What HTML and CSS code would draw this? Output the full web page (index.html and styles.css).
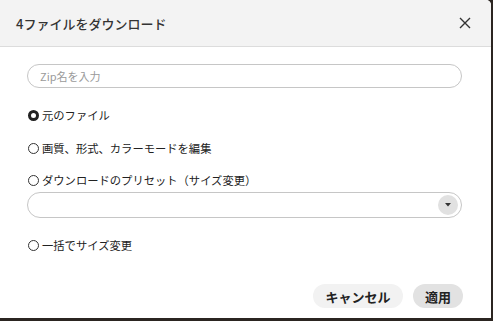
FILE: index.html
```html
<!DOCTYPE html>
<html lang="ja">
<head>
  <meta charset="UTF-8">
  <title>4ファイルをダウンロード</title>
  <link rel="stylesheet" href="styles.css">
</head>
<body>

  <div class="dialog">
    <div class="dialog-head">
      <h2 class="title">4ファイルをダウンロード</h2>
      <button class="close" aria-label="閉じる">
        <svg width="12" height="12" viewBox="0 0 12 12"><path d="M1 1L11 11M11 1L1 11" stroke="#333" stroke-width="1.4" fill="none"/></svg>
      </button>
    </div>

    <div class="dialog-body">
      <input class="zip-name" type="text" placeholder="Zip名を入力">

      <label class="opt opt-first"><span class="radio checked"></span>元のファイル</label>
      <label class="opt"><span class="radio"></span>画質、形式、カラーモードを編集</label>
      <label class="opt opt-tight"><span class="radio"></span>ダウンロードのプリセット（サイズ変更）</label>

      <div class="select">
        <span class="select-arrow">
          <svg width="6" height="4" viewBox="0 0 6 4"><path d="M0 0H6L3 3.5Z" fill="#333"/></svg>
        </span>
      </div>

      <label class="opt opt-last"><span class="radio"></span>一括でサイズ変更</label>
    </div>

    <div class="dialog-foot">
      <button class="btn btn-cancel">キャンセル</button>
      <button class="btn btn-apply">適用</button>
    </div>
  </div>

</body>
</html>
```

FILE: styles.css
```css
body {
  margin: 0;
  background-color: #2b2521;
  font-family: "Noto Sans CJK JP", "Noto Sans", sans-serif;
  color: #222;
}
.dialog {
  width: 491px;
  height: 318px;
  background-color: #fff;
  border-top-right-radius: 5px;
  display: flex;
  flex-direction: column;
  overflow: hidden;
}
.dialog-head {
  height: 46px;
  background-color: #f3f3f3;
  border-bottom: 1px solid #dcdcdc;
  display: flex;
  align-items: center;
  justify-content: space-between;
  padding: 0 20px 0 16px;
}
.title {
  margin: 0;
  font-size: 13px;
  font-weight: 500;
  color: #333;
}
.close {
  background: none;
  border: none;
  padding: 0;
  width: 12px;
  height: 12px;
  display: flex;
}
.dialog-body {
  padding: 17px 29px 0 27px;
  display: flex;
  flex-direction: column;
  flex: 1;
}
.zip-name {
  height: 24px;
  box-sizing: border-box;
  border: 1px solid #c6c6c6;
  border-radius: 12px;
  padding: 0 12px;
  font-family: inherit;
  font-size: 11px;
  outline: none;
}
.zip-name::placeholder {
  color: #9a9a9a;
}
.opt {
  display: flex;
  align-items: center;
  font-size: 11.3px;
  line-height: 16px;
  color: #222;
  margin-top: 17px;
}
.opt-first {
  margin-top: 19px;
}
.opt-tight {
  margin-top: 16px;
}
.opt-last {
  margin-top: 19px;
}
.radio {
  width: 11px;
  height: 11px;
  border: 1px solid #333;
  border-radius: 50%;
  margin-right: 3px;
  margin-left: 1px;
  box-sizing: border-box;
}
.radio.checked {
  border: 3px solid #222;
}
.select {
  margin-top: 4px;
  height: 26px;
  box-sizing: border-box;
  border: 1px solid #c6c6c6;
  border-radius: 13px;
  display: flex;
  align-items: center;
  justify-content: flex-end;
  padding-right: 3px;
}
.select-arrow {
  width: 20px;
  height: 20px;
  border-radius: 50%;
  background-color: #e1e1e1;
  display: flex;
  align-items: center;
  justify-content: center;
}
.dialog-foot {
  display: flex;
  justify-content: flex-end;
  gap: 10px;
  padding: 0 28px 10px 0;
}
.btn {
  height: 24px;
  border: none;
  border-radius: 12px;
  font-family: inherit;
  font-size: 13px;
  font-weight: bold;
  color: #222;
  padding: 0;
  white-space: nowrap;
}
.btn-cancel {
  background-color: #f2f2f2;
  width: 90px;
}
.btn-apply {
  background-color: #e2e2e2;
  width: 50px;
}
```
